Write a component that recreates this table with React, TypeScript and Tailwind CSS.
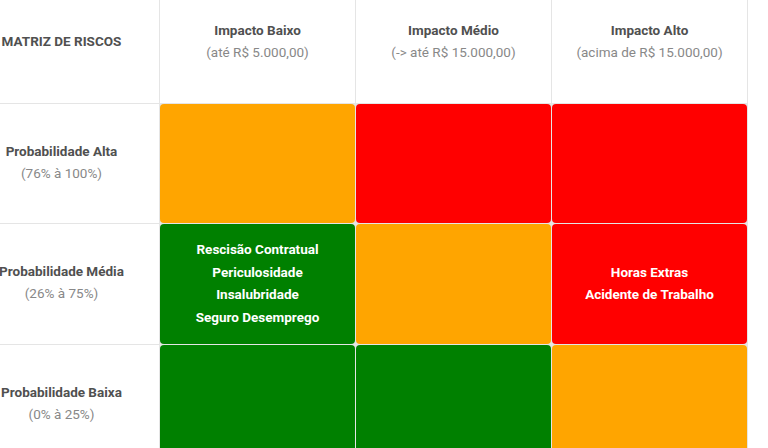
import { Fragment } from 'react';

const font = { fontFamily: 'Roboto, "Noto Sans", sans-serif' };

type Level = 'low' | 'mid' | 'high';

const bg: Record<Level, string> = {
  low: 'bg-[#008000]',
  mid: 'bg-[#ffa500]',
  high: 'bg-[#ff0000]',
};

const impacts = [
  { title: 'Impacto Baixo', range: '(até R$ 5.000,00)' },
  { title: 'Impacto Médio', range: '(-> até R$ 15.000,00)' },
  { title: 'Impacto Alto', range: '(acima de R$ 15.000,00)' },
];

const rows: { title: string; range: string; cells: { level: Level; items: string[] }[] }[] = [
  {
    title: 'Probabilidade Alta',
    range: '(76% à 100%)',
    cells: [
      { level: 'mid', items: [] },
      { level: 'high', items: [] },
      { level: 'high', items: [] },
    ],
  },
  {
    title: 'Probabilidade Média',
    range: '(26% à 75%)',
    cells: [
      { level: 'low', items: ['Rescisão Contratual', 'Periculosidade', 'Insalubridade', 'Seguro Desemprego'] },
      { level: 'mid', items: [] },
      { level: 'high', items: ['Horas Extras', 'Acidente de Trabalho'] },
    ],
  },
  {
    title: 'Probabilidade Baixa',
    range: '(0% à 25%)',
    cells: [
      { level: 'low', items: [] },
      { level: 'low', items: [] },
      { level: 'mid', items: [] },
    ],
  },
];

function Label({ title, range }: { title: string; range?: string }) {
  return (
    <div className="flex flex-col items-center justify-center bg-white pb-1 text-center text-[13.5px] leading-[22px]">
      <span className="font-bold text-[#505050]">{title}</span>
      {range && <span className="text-[#888]">{range}</span>}
    </div>
  );
}

export default function App() {
  return (
    <div className="h-[448px] w-[768px] overflow-hidden bg-white" style={font}>
      <div className="ml-[-37px] mt-[-19px] grid w-max grid-cols-[repeat(4,195px)] grid-rows-[121px_119px_120px_120px] gap-px border border-[#e5e5e5] bg-[#e5e5e5]">
        <Label title="MATRIZ DE RISCOS" />
        {impacts.map((i) => (
          <Label key={i.title} title={i.title} range={i.range} />
        ))}
        {rows.map((r) => (
          <Fragment key={r.title}>
            <Label title={r.title} range={r.range} />
            {r.cells.map((c, idx) => (
              <div
                key={idx}
                className={`flex flex-col items-center justify-center rounded-[4px] pb-[2px] text-center text-[13.5px] font-bold leading-[22.5px] text-white ${bg[c.level]}`}
              >
                {c.items.map((t) => (
                  <span key={t}>{t}</span>
                ))}
              </div>
            ))}
          </Fragment>
        ))}
      </div>
    </div>
  );
}
